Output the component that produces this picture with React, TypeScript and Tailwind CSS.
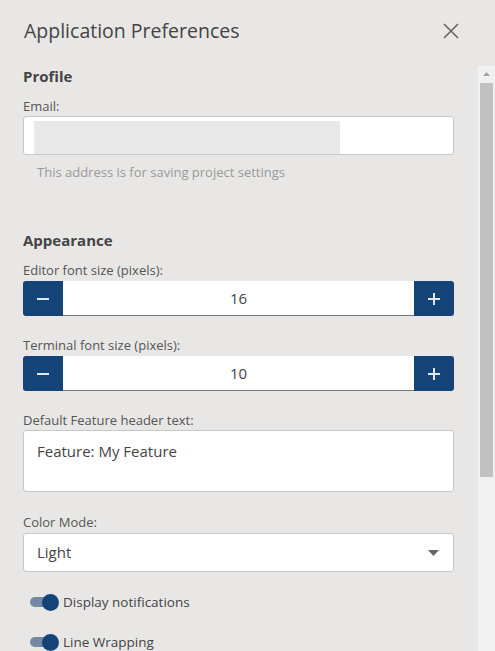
import React from "react";

const font = { fontFamily: '"Open Sans", "Noto Sans", sans-serif' };

const Label = ({ children, className = "" }: { children: React.ReactNode; className?: string }) => (
  <div className={`text-[13px] leading-[18px] text-[#555] ${className}`}>{children}</div>
);

const Stepper = ({ value }: { value: number }) => (
  <div className="mt-[2px] flex h-[35px] w-full">
    <button className="flex w-[40px] items-center justify-center rounded-l-[3px] bg-[#144477]">
      <span className="block h-[2px] w-[12px] bg-[#dfe6ee]" />
    </button>
    <div className="flex flex-1 items-center justify-center border-b border-[#777] bg-white text-[15px] text-[#444]">
      {value}
    </div>
    <button className="relative flex w-[40px] items-center justify-center rounded-r-[3px] bg-[#144477]">
      <span className="absolute h-[2px] w-[12px] bg-[#dfe6ee]" />
      <span className="absolute h-[12px] w-[2px] bg-[#dfe6ee]" />
    </button>
  </div>
);

const Toggle = ({ label, className = "" }: { label: string; className?: string }) => (
  <div className={`flex h-[20px] items-center ${className}`}>
    <div className="relative ml-[7px] h-[10px] w-[27px] rounded-full bg-[#7289a5]">
      <span className="absolute left-[12px] top-[-3.5px] h-[17px] w-[17px] rounded-full bg-[#144477]" />
    </div>
    <span className="ml-[6px] text-[13.5px] font-medium text-[#444]">{label}</span>
  </div>
);

export default function App() {
  return (
    <div className="flex h-[651px] w-[495px] flex-col overflow-hidden bg-[#e8e7e5]" style={font}>
      {/* header */}
      <div className="flex h-[66px] shrink-0 items-start justify-between pl-6 pr-[36px] pt-[18px]">
        <h1 className="text-[19.5px] leading-[26px] text-[#444]">Application Preferences</h1>
        <button className="mt-[5px]">
          <svg width="16" height="16" viewBox="0 0 16 16">
            <path d="M1 1L15 15M15 1L1 15" stroke="#666" strokeWidth="1.6" />
          </svg>
        </button>
      </div>

      <div className="flex min-h-0 flex-1">
        {/* settings body */}
        <div className="flex-1 pl-[23px] pr-[24px]">
          <div className="text-[15px] font-bold leading-[20px] text-[#444]">Profile</div>
          <Label className="mt-[11px]">Email:</Label>
          <div className="mt-[1px] h-[39px] rounded-[3px] border border-[#c8c8c8] bg-white pl-[10px] pt-[4px]">
            <div className="h-[33px] w-[306px] bg-[#e8e8e8]" />
          </div>
          <div className="mt-[8px] pl-[14px] text-[13px] leading-[18px] text-[#999]">
            This address is for saving project settings
          </div>

          <div className="mt-[49px] text-[15px] font-bold leading-[20px] text-[#444]">Appearance</div>
          <Label className="mt-[11px]">Editor font size (pixels):</Label>
          <Stepper value={16} />
          <Label className="mt-[20px]">Terminal font size (pixels):</Label>
          <Stepper value={10} />

          <Label className="mt-[20px]">Default Feature header text:</Label>
          <div className="mt-[1px] h-[62px] rounded-[3px] border border-[#c8c8c8] bg-white pl-[13px] pt-[10px] text-[15px] leading-[20px] text-[#444]">
            Feature: My Feature
          </div>

          <Label className="mt-[21px]">Color Mode:</Label>
          <div className="mt-[2px] flex h-[39px] items-center justify-between rounded-[3px] border border-[#c8c8c8] bg-white pl-[13px] pr-[14px] text-[15px] text-[#444]">
            <span>Light</span>
            <svg width="11" height="6" viewBox="0 0 11 6">
              <path d="M0 0H11L5.5 6Z" fill="#666" />
            </svg>
          </div>

          <Toggle label="Display notifications" className="mt-[20px]" />
          <Toggle label="Line Wrapping" className="mt-[20px]" />
        </div>

        {/* scrollbar */}
        <div className="flex w-[17px] shrink-0 flex-col items-center bg-[#f1f1f1]">
          <svg className="mt-[6px]" width="7" height="4" viewBox="0 0 7 4">
            <path d="M0 4H7L3.5 0Z" fill="#a3a3a3" />
          </svg>
          <div className="mt-[7px] h-[394px] w-[13px] bg-[#c1c1c1]" />
        </div>
      </div>
    </div>
  );
}
